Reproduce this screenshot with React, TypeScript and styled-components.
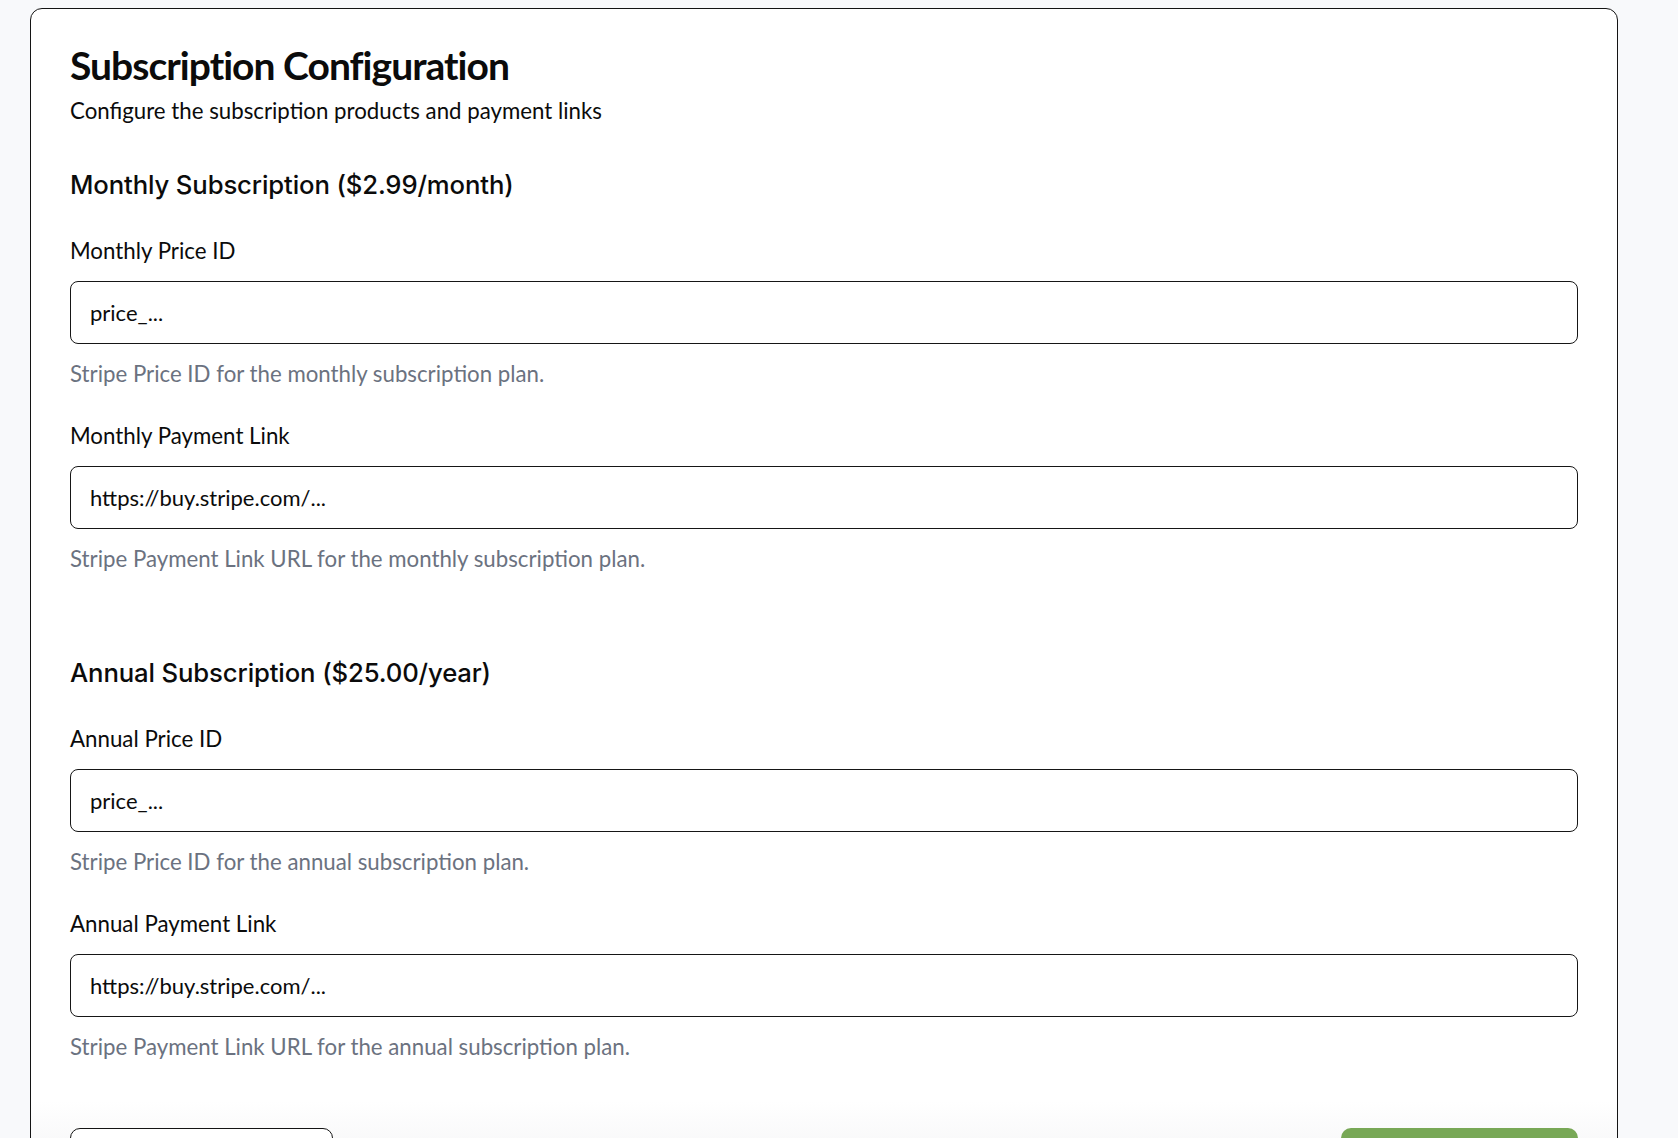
import React from 'react'
import styled, { createGlobalStyle } from 'styled-components'

const GlobalStyle = createGlobalStyle`
  html, body {
    margin: 0;
    background: #f8f9fb;
  }
  body {
    font-family: Lato, 'Noto Sans', sans-serif;
    color: #0b0b0b;
  }
  * {
    box-sizing: border-box;
  }
`

const StyledPage = styled.div`
  padding: 8px 0 0 30px;
`

const StyledCard = styled.div`
  width: 1588px;
  background: #fff;
  border: 1px solid #141414;
  border-radius: 12px;
  padding: 34px 39px 0;
`

const StyledTitle = styled.h1`
  margin: 0;
  font-size: 39px;
  line-height: 44px;
  font-weight: 700;
  letter-spacing: -0.025em;
`

const StyledSubtitle = styled.p`
  margin: 10px 0 0;
  font-size: 22.25px;
  line-height: 28px;
`

const StyledSection = styled.section<{ $gap: number }>`
  margin-top: ${(p) => p.$gap}px;
  display: flex;
  flex-direction: column;
`

const StyledSectionTitle = styled.h2`
  margin: 0 0 36px;
  font-family: Inter, 'Liberation Sans', sans-serif;
  font-size: 25.7px;
  line-height: 32px;
  font-weight: 500;
  letter-spacing: -0.005em;
`

const StyledField = styled.div`
  display: flex;
  flex-direction: column;

  & + & {
    margin-top: 34px;
  }
`

const StyledLabel = styled.label`
  font-size: 22.3px;
  line-height: 28px;
`

const StyledInput = styled.input`
  margin-top: 16px;
  height: 63px;
  width: 100%;
  padding: 0 19px;
  border: 1px solid #161616;
  border-radius: 8px;
  font-family: Lato, 'Noto Sans', sans-serif;
  font-size: 22px;
  color: #0b0b0b;
  background: #fff;
  outline: none;

  &::placeholder {
    color: #0b0b0b;
    opacity: 1;
  }
`

const StyledHelp = styled.p`
  margin: 16px 0 0;
  font-size: 22.25px;
  line-height: 28px;
  color: #6b7280;
`

const StyledFooter = styled.div`
  margin: 40px -39px 0;
  padding: 27px 39px 24px;
  display: flex;
  justify-content: space-between;
  background: linear-gradient(to bottom, rgba(255, 255, 255, 0), #f6f6f7 60px);
  border-radius: 0 0 12px 12px;
`

const StyledButton = styled.button<{ $primary?: boolean }>`
  height: 48px;
  width: ${(p) => (p.$primary ? 237 : 263)}px;
  border-radius: 10px;
  font-family: Lato, 'Noto Sans', sans-serif;
  font-size: 20px;
  font-weight: 600;
  cursor: pointer;
  border: ${(p) => (p.$primary ? 'none' : '1px solid #141414')};
  background: ${(p) => (p.$primary ? '#78a856' : '#fff')};
  color: ${(p) => (p.$primary ? '#fff' : '#0b0b0b')};
`

type FieldDef = {
  label: string
  placeholder: string
  help: string
}

const sections: { title: string; gap: number; fields: FieldDef[] }[] = [
  {
    title: 'Monthly Subscription ($2.99/month)',
    gap: 44,
    fields: [
      {
        label: 'Monthly Price ID',
        placeholder: 'price_...',
        help: 'Stripe Price ID for the monthly subscription plan.',
      },
      {
        label: 'Monthly Payment Link',
        placeholder: 'https://buy.stripe.com/...',
        help: 'Stripe Payment Link URL for the monthly subscription plan.',
      },
    ],
  },
  {
    title: 'Annual Subscription ($25.00/year)',
    gap: 84,
    fields: [
      {
        label: 'Annual Price ID',
        placeholder: 'price_...',
        help: 'Stripe Price ID for the annual subscription plan.',
      },
      {
        label: 'Annual Payment Link',
        placeholder: 'https://buy.stripe.com/...',
        help: 'Stripe Payment Link URL for the annual subscription plan.',
      },
    ],
  },
]

export default function App() {
  return (
    <StyledPage>
      <GlobalStyle />
      <StyledCard>
        <StyledTitle>Subscription Configuration</StyledTitle>
        <StyledSubtitle>Configure the subscription products and payment links</StyledSubtitle>

        {sections.map((section) => (
          <StyledSection key={section.title} $gap={section.gap}>
            <StyledSectionTitle>{section.title}</StyledSectionTitle>
            {section.fields.map((field) => (
              <StyledField key={field.label}>
                <StyledLabel>{field.label}</StyledLabel>
                <StyledInput type="text" placeholder={field.placeholder} />
                <StyledHelp>{field.help}</StyledHelp>
              </StyledField>
            ))}
          </StyledSection>
        ))}

        <StyledFooter>
          <StyledButton>Cancel</StyledButton>
          <StyledButton $primary>Save Configuration</StyledButton>
        </StyledFooter>
      </StyledCard>
    </StyledPage>
  )
}
